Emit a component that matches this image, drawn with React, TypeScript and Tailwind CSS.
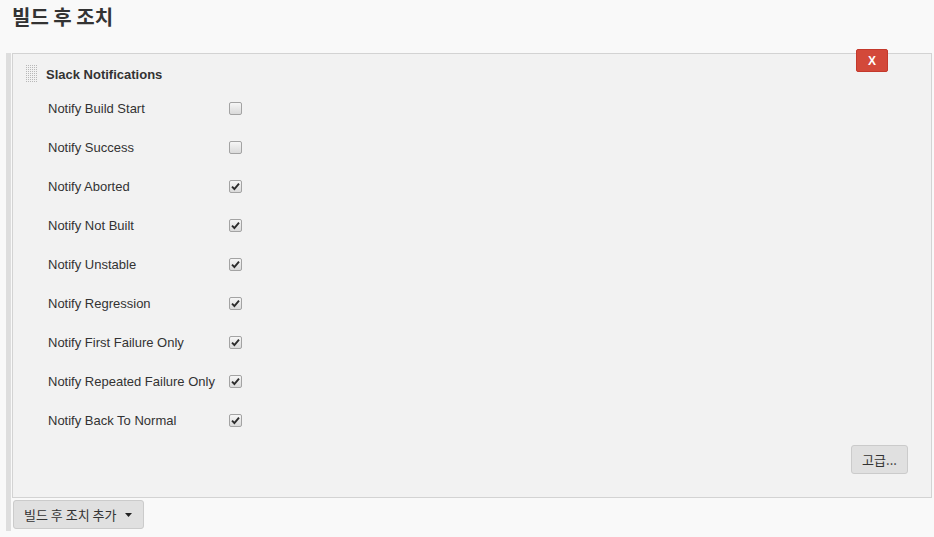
import React, { useState } from "react";

const sans = "font-['Liberation_Sans','Noto_Sans_CJK_KR',sans-serif]";
const kr = "font-['Noto_Sans_CJK_KR','Liberation_Sans',sans-serif]";

type Option = { label: string; checked: boolean };

const initialOptions: Option[] = [
  { label: "Notify Build Start", checked: false },
  { label: "Notify Success", checked: false },
  { label: "Notify Aborted", checked: true },
  { label: "Notify Not Built", checked: true },
  { label: "Notify Unstable", checked: true },
  { label: "Notify Regression", checked: true },
  { label: "Notify First Failure Only", checked: true },
  { label: "Notify Repeated Failure Only", checked: true },
  { label: "Notify Back To Normal", checked: true },
];

const CheckBox = ({ checked, onToggle }: { checked: boolean; onToggle: () => void }) => (
  <button
    type="button"
    onClick={onToggle}
    className="flex h-[13px] w-[13px] items-center justify-center rounded-[2px] border border-[#a3a3a3] bg-gradient-to-b from-[#f6f6f6] to-[#dadada] p-0"
  >
    {checked && (
      <svg width="9" height="9" viewBox="0 0 9 9">
        <path d="M1 4.6 L3.4 7 L8 1.6" fill="none" stroke="#2b2b2b" strokeWidth="1.9" />
      </svg>
    )}
  </button>
);

const DragHandle = () => {
  const dots = [];
  for (let r = 0; r < 9; r++) {
    for (let c = 0; c < 6; c++) {
      dots.push(<rect key={`${r}-${c}`} x={c * 2} y={r * 2} width="1" height="1" fill="#b8b8b8" />);
    }
  }
  return (
    <svg width="12" height="18" viewBox="0 0 12 18">
      {dots}
    </svg>
  );
};

const App = () => {
  const [options, setOptions] = useState<Option[]>(initialOptions);

  const toggle = (i: number) => {
    setOptions((prev) => prev.map((o, idx) => (idx === i ? { ...o, checked: !o.checked } : o)));
  };

  return (
    <div className="min-h-[537px] w-full bg-[#f9f9f9] text-[#333]">
      <h1 className={`${kr} m-0 h-[53px] pl-[12px] pt-[3px] text-[20px] font-bold leading-[28px] text-[#333]`}>
        빌드 후 조치
      </h1>

      <div className="ml-[6px] mr-[2px] border-l-[5px] border-[#dedede] pb-[2px] pl-[1px]">
        {/* post-build step panel */}
        <div className="relative border border-[#d3d3d3] bg-[#f2f2f2] px-0 pb-[23px] pt-[11px]">
          <button
            type="button"
            className={`${sans} absolute right-[43px] top-[-5px] flex h-[23px] w-[32px] items-center justify-center rounded-[2px] border border-[#c4392c] bg-[#d3493a] text-[12px] font-bold text-white`}
          >
            X
          </button>

          <div className="flex h-[18px] items-center gap-[8px] pl-[13px]">
            <DragHandle />
            <span className={`${sans} text-[13px] font-bold leading-none text-[#333]`}>Slack Notifications</span>
          </div>

          <div className="mt-[6px] flex flex-col pl-[35px]">
            {options.map((o, i) => (
              <div key={o.label} className="flex h-[39px] items-center">
                <span className={`${sans} w-[181px] text-[13px] leading-none text-[#333]`}>{o.label}</span>
                <CheckBox checked={o.checked} onToggle={() => toggle(i)} />
              </div>
            ))}
          </div>

          <div className="mt-[5px] flex justify-end pr-[23px]">
            <button
              type="button"
              className={`${kr} flex h-[29px] w-[57px] items-center justify-center rounded-[3px] border border-[#cbcbcb] bg-[#e0e0e0] text-[13px] text-[#333]`}
            >
              고급...
            </button>
          </div>
        </div>

        <button
          type="button"
          className={`${kr} ml-[1px] mt-[2px] flex h-[29px] w-[131px] items-center gap-[9px] rounded-[3px] border border-[#cbcbcb] bg-[#e0e0e0] pl-[10px] text-[13px] text-[#333]`}
        >
          빌드 후 조치 추가
          <svg width="7" height="4" viewBox="0 0 7 4">
            <path d="M0 0 H7 L3.5 4 Z" fill="#222" />
          </svg>
        </button>
      </div>
    </div>
  );
};

export default App;
